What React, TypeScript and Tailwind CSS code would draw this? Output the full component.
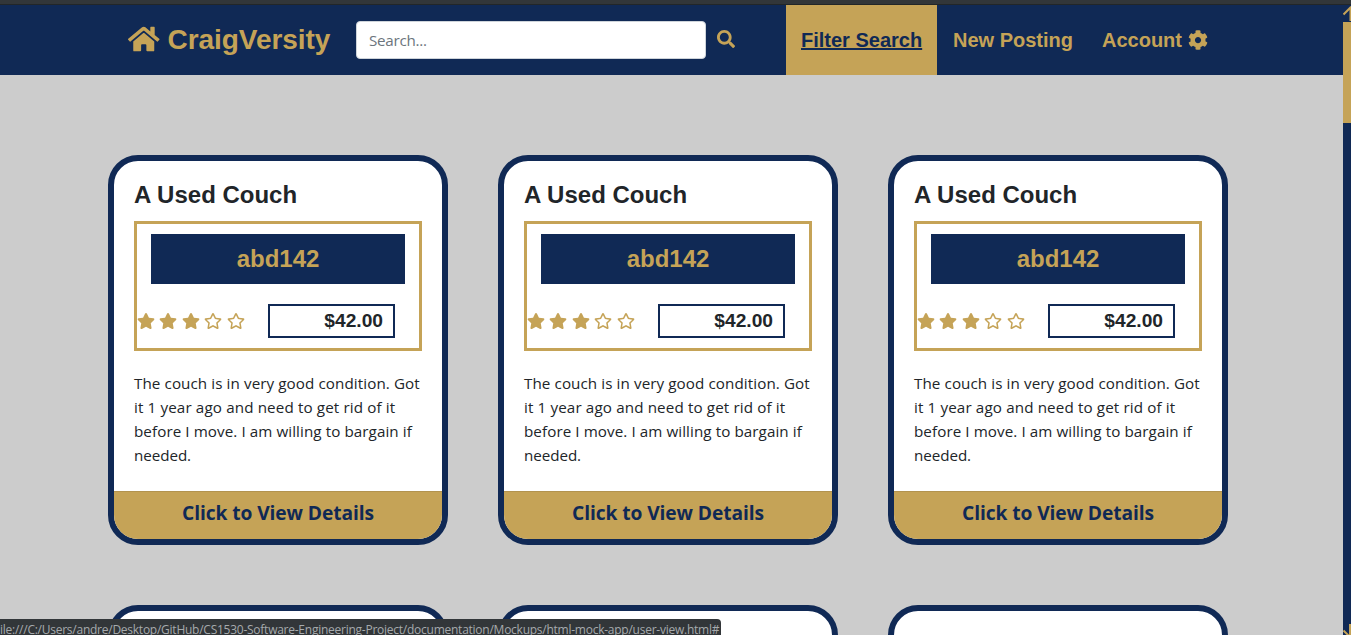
import { FaCog, FaHome, FaRegStar, FaSearch, FaStar } from "react-icons/fa";

const stars = [true, true, true, false, false];

const lines = [
  { text: "The couch is in very good condition. Got", tracking: "tracking-[0.09px]" },
  { text: "it 1 year ago and need to get rid of it", tracking: "tracking-[0.13px]" },
  { text: "before I move. I am willing to bargain if", tracking: "tracking-[0.08px]" },
  { text: "needed.", tracking: "tracking-[-0.06px]" },
];

function ListingCard() {
  return (
    <article className="flex h-[390px] w-[340px] shrink-0 flex-col overflow-hidden rounded-[30px] border-6 border-[#102955] bg-white">
      <div className="flex-1 px-5 pt-[19px]">
        <h2 className="h-[41px] whitespace-nowrap text-2xl leading-[30px] font-bold text-[#212529]">A Used Couch</h2>
        <div className="h-[130px] w-[288px] border-3 border-[#c5a357] pt-[10px]">
          <div className="mx-[14px] h-[50px] bg-[#102955] text-center text-2xl leading-[50px] font-bold text-[#c5a357]">
            abd142
          </div>
          <div className="mt-5 flex">
            <div className="flex w-[131px] gap-[4.4px] pt-[9px] text-[#c5a357]">
              {stars.map((filled, i) =>
                filled ? (
                  <FaStar key={i} className="h-4 w-[18px]" />
                ) : (
                  <FaRegStar key={i} className="h-4 w-[18px]" />
                ),
              )}
            </div>
            <div className="h-[34px] w-[127px] border-2 border-[#102955] pr-[10px] text-right text-[19.2px] leading-[30px] font-bold text-[#212529]">
              $42.00
            </div>
          </div>
        </div>
        <p className="mt-5 font-['Open_Sans','Noto_Sans',sans-serif] text-[15.2px] leading-6 whitespace-nowrap text-[#212529]">
          {lines.map((line) => (
            <span key={line.text} className={`block ${line.tracking}`}>
              {line.text}
            </span>
          ))}
        </p>
      </div>
      <button className="h-[48px] border-t border-[#b2934f] bg-[#c5a357] pb-[6px] text-center font-['Open_Sans','Noto_Sans',sans-serif] text-[19.2px] leading-[41px] font-bold tracking-[-0.08px] text-[#102955]">
        Click to View Details
      </button>
    </article>
  );
}

export default function App() {
  return (
    <div className="relative flex h-[635px] w-[1351px] flex-col overflow-hidden bg-[#cccccc] font-['Liberation_Sans',Arial,sans-serif]">
      <div className="h-[5px] shrink-0 border-b border-[#222628] bg-[#323639]" />
      <div className="flex min-h-0 flex-1">
        <div className="w-[1343px] overflow-hidden">
          <header className="flex h-[70px] bg-[#102955] pl-32 text-xl font-bold text-[#c5a357]">
            <a className="flex w-[228px] items-center text-[28px] tracking-[-0.05px]">
              <FaHome className="mr-2 -mt-[3px] h-[28px] w-[31.5px] shrink-0" />
              CraigVersity
            </a>
            <input
              className="mt-4 h-[38px] w-[350px] rounded border border-[#ced4da] bg-white px-3 font-['Open_Sans','Noto_Sans',sans-serif] text-[15.2px] font-normal tracking-[-0.25px] placeholder:text-[#6c757d]"
              placeholder="Search..."
            />
            <button className="ml-[11px] flex w-[69px] items-center">
              <FaSearch className="-mt-[2px] h-[18px] w-[18px]" />
            </button>
            <nav className="flex leading-[70px] whitespace-nowrap">
              <a className="w-[151px] bg-[#c5a357] pl-[15px] text-[#102955] underline">Filter Search</a>
              <a className="w-[150px] pl-4">New Posting</a>
              <a className="flex items-center pl-[15px]">
                Account <FaCog className="ml-[6px] h-5 w-5" />
              </a>
            </nav>
          </header>
          <main className="grid grid-cols-[repeat(3,340px)] gap-x-[50px] gap-y-[60px] pt-20 pl-[108px]">
            {Array.from({ length: 3 }, (_, i) => (
              <ListingCard key={i} />
            ))}
            {Array.from({ length: 3 }, (_, i) => (
              <article key={i} className="h-[390px] rounded-[30px] border-6 border-[#102955] bg-white" />
            ))}
          </main>
        </div>
        <div className="flex w-2 flex-col overflow-hidden bg-[#102955]">
          <svg className="h-[17px] w-4 shrink-0 text-[#c5a357]" viewBox="0 0 16 17" fill="none" stroke="currentColor" strokeWidth="2">
            <path d="M.5 9.5 7.5 2.5 14.5 9.5M7.5 3V16" />
          </svg>
          <div className="h-[101px] shrink-0 bg-[#c5a357]" />
          <svg className="mt-auto h-[13px] w-4 shrink-0 text-[#c5a357]" viewBox="0 0 16 13" fill="none" stroke="currentColor" strokeWidth="2">
            <path d="M.5 8.5 7.5 15.5M7 2V15" />
          </svg>
        </div>
      </div>
      <div className="absolute bottom-0 left-0 h-4 w-[721px] overflow-hidden rounded-tr bg-[#323639] font-['Open_Sans','Noto_Sans',sans-serif] text-xs leading-[22px] tracking-[-0.25px] whitespace-nowrap text-[#a6aaad]">
        ile:///C:/Users/andre/Desktop/GitHub/CS1530-Software-Engineering-Project/documentation/Mockups/html-mock-app/user-view.html#
      </div>
    </div>
  );
}
